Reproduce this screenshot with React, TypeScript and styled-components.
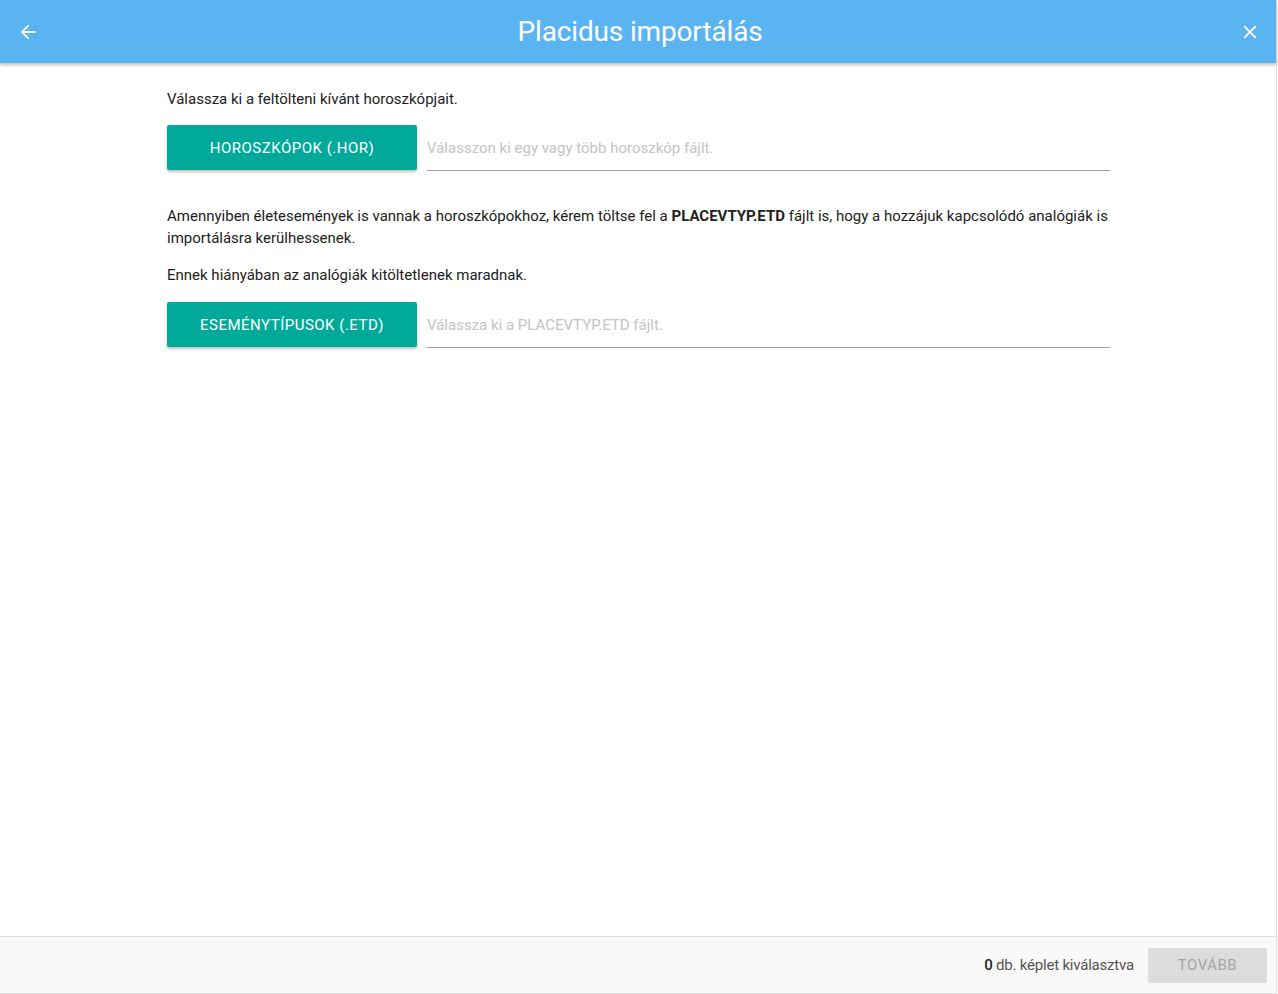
import React from 'react'
import styled, { createGlobalStyle } from 'styled-components'

const GlobalStyle = createGlobalStyle`
  html, body {
    margin: 0;
    padding: 0;
    background: #ffffff;
    font-family: Roboto, "Noto Sans", "Liberation Sans", sans-serif;
  }
`

const Frame = styled.div`
  width: 1276px;
  height: 993px;
  border-right: 1px solid #e0e0e0;
  border-bottom: 1px solid #e0e0e0;
  display: flex;
  flex-direction: column;
  background: #fff;
`

const Header = styled.header`
  height: 63px;
  flex-shrink: 0;
  background: #5ab4f2;
  box-shadow: 0 2px 3px rgba(0, 0, 0, 0.25);
  display: flex;
  align-items: center;
  justify-content: space-between;
  padding: 0 14px 0 16px;
  position: relative;
  z-index: 1;
`

const Title = styled.h1`
  margin: 0 0 0 2px;
  font-size: 28px;
  font-weight: 400;
  letter-spacing: -0.15px;
  color: #fff;
`

const IconButton = styled.button`
  width: 24px;
  height: 24px;
  padding: 0;
  border: none;
  background: transparent;
  display: flex;
  align-items: center;
  justify-content: center;
  cursor: pointer;
`

const Content = styled.main`
  flex: 1;
  padding: 25px 0 0 167px;
`

const Column = styled.div`
  width: 943px;
`

const Text = styled.p<{ $gap?: number }>`
  margin: 0 0 ${p => p.$gap ?? 15}px;
  font-size: 15px;
  line-height: 22px;
  color: #212121;
`

const UploadRow = styled.div<{ $gap?: number }>`
  display: flex;
  align-items: stretch;
  gap: 10px;
  margin-bottom: ${p => p.$gap ?? 0}px;
`

const UploadButton = styled.button`
  width: 250px;
  height: 45px;
  flex-shrink: 0;
  border: none;
  border-radius: 2px;
  background: #00a99a;
  color: #fff;
  font-family: inherit;
  font-size: 15px;
  font-weight: 400;
  letter-spacing: 0.5px;
  text-transform: uppercase;
  box-shadow: 0 2px 3px rgba(0, 0, 0, 0.25);
  cursor: pointer;
`

const FileField = styled.input`
  flex: 1;
  border: none;
  border-bottom: 1px solid #9e9e9e;
  outline: none;
  background: transparent;
  font-family: inherit;
  font-size: 15px;
  color: #212121;
  padding: 0;
  height: 46px;
  box-sizing: border-box;
  &::placeholder {
    color: #c4c4c4;
  }
`

const Footer = styled.footer`
  height: 56px;
  flex-shrink: 0;
  background: #f9f9f9;
  border-top: 1px solid #e0e0e0;
  display: flex;
  align-items: center;
  justify-content: flex-end;
  gap: 14px;
  padding: 0 9px;
`

const Count = styled.span`
  font-size: 15px;
  letter-spacing: -0.2px;
  color: #555;
  b {
    color: #212121;
    font-weight: 500;
  }
`

const NextButton = styled.button`
  width: 119px;
  height: 35px;
  border: none;
  border-radius: 2px;
  background: #dcdcdc;
  color: #a6a6a6;
  font-family: inherit;
  font-size: 15px;
  letter-spacing: 0.5px;
  text-transform: uppercase;
`

export default function App() {
  return (
    <>
      <GlobalStyle />
      <Frame>
        <Header>
          <IconButton aria-label="Vissza">
            <svg width="22" height="22" viewBox="0 0 24 24" fill="#fff">
              <path d="M20 11H7.83l5.59-5.59L12 4l-8 8 8 8 1.41-1.41L7.83 13H20v-2z" />
            </svg>
          </IconButton>
          <Title>Placidus importálás</Title>
          <IconButton aria-label="Bezárás">
            <svg width="22" height="22" viewBox="0 0 24 24" fill="#fff">
              <path d="M19 6.41L17.59 5 12 10.59 6.41 5 5 6.41 10.59 12 5 17.59 6.41 19 12 13.41 17.59 19 19 17.59 13.41 12z" />
            </svg>
          </IconButton>
        </Header>
        <Content>
          <Column>
            <Text $gap={15}>Válassza ki a feltölteni kívánt horoszkópjait.</Text>
            <UploadRow $gap={34}>
              <UploadButton>Horoszkópok (.hor)</UploadButton>
              <FileField readOnly placeholder="Válasszon ki egy vagy több horoszkóp fájlt." />
            </UploadRow>
            <Text>
              Amennyiben életesemények is vannak a horoszkópokhoz, kérem töltse fel a <b>PLACEVTYP.ETD</b> fájlt
              is, hogy a hozzájuk kapcsolódó analógiák is importálásra kerülhessenek.
            </Text>
            <Text $gap={16}>Ennek hiányában az analógiák kitöltetlenek maradnak.</Text>
            <UploadRow>
              <UploadButton>Eseménytípusok (.etd)</UploadButton>
              <FileField readOnly placeholder="Válassza ki a PLACEVTYP.ETD fájlt." />
            </UploadRow>
          </Column>
        </Content>
        <Footer>
          <Count>
            <b>0</b> db. képlet kiválasztva
          </Count>
          <NextButton disabled>Tovább</NextButton>
        </Footer>
      </Frame>
    </>
  )
}
